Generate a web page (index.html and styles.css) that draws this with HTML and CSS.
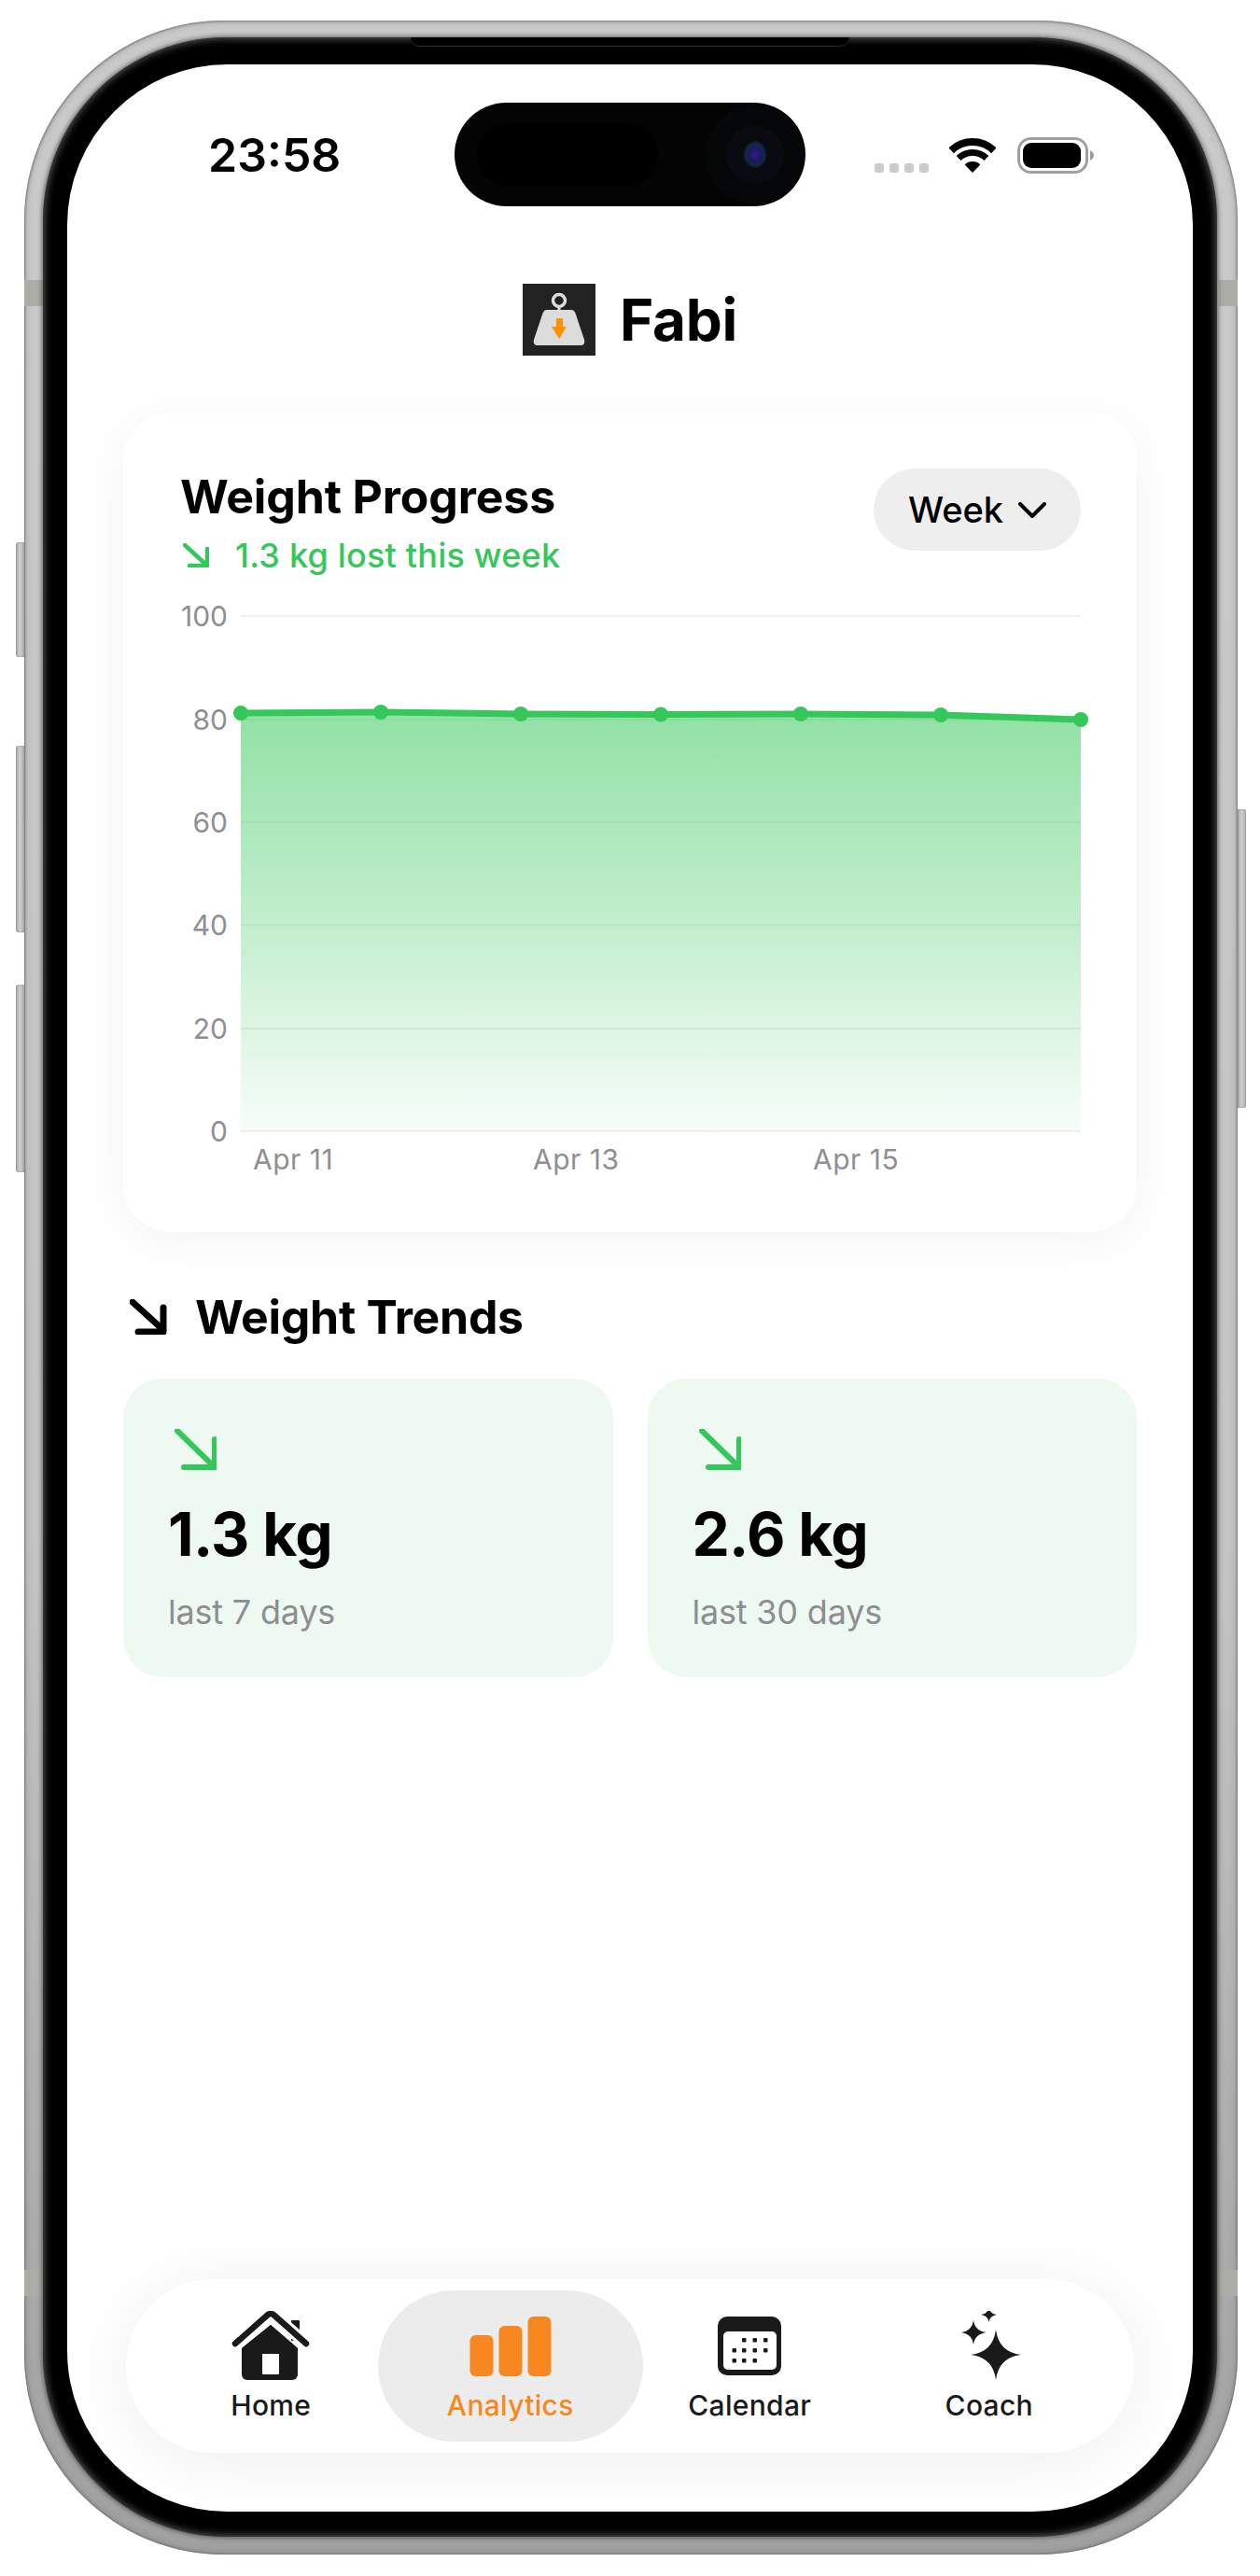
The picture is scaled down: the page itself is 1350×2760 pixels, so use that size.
FILE: index.html
```html
<!DOCTYPE html>
<html>
<head>
    <meta charset="utf-8">
    <title>Fabi</title>
    <link rel="stylesheet" href="styles.css">
</head>
<body>

<div class="device">
    <span class="side-btn btn-action"></span>
    <span class="side-btn btn-up"></span>
    <span class="side-btn btn-down"></span>
    <span class="side-btn btn-power"></span>
    <span class="band band-tl"></span>
    <span class="band band-tr"></span>
    <span class="band band-bl"></span>
    <span class="band band-br"></span>

    <div class="bezel">
        <span class="speaker"></span>
        <div class="screen">

            <div class="status">
                <div class="time">23:58</div>
                <svg class="island" viewBox="0 0 376 111">
                    <defs>
                        <radialGradient id="lens" cx="50%" cy="50%" r="50%">
                            <stop offset="0" stop-color="#2b1f8a"/>
                            <stop offset="0.5" stop-color="#1c1a5c"/>
                            <stop offset="0.8" stop-color="#0f2a40"/>
                            <stop offset="1" stop-color="#0a0c12"/>
                        </radialGradient>
                    </defs>
                    <rect width="376" height="111" rx="55.5" fill="#040404"/>
                    <circle cx="322" cy="55.5" r="53" fill="#060708"/>
                    <circle cx="322" cy="55.5" r="31" fill="#090b10"/>
                    <ellipse cx="322" cy="55.5" rx="13" ry="15" fill="url(#lens)"/>
                    <rect x="24" y="22" width="194" height="67" rx="33" fill="#000"/>
                </svg>
                <div class="status-icons">
                    <div class="signal"><i></i><i></i><i></i><i></i></div>
                    <svg class="wifi" viewBox="0 0 50 37">
                        <path d="M2.1 13.3A33 33 0 0 1 47.9 13.3" fill="none" stroke="#000" stroke-width="8"/>
                        <path d="M10.1 21.5A21.5 21.5 0 0 1 39.9 21.5" fill="none" stroke="#000" stroke-width="7"/>
                        <path d="M25 37L16.7 28.4A12 12 0 0 1 33.3 28.4Z" fill="#000"/>
                    </svg>
                    <svg class="battery" viewBox="0 0 82 39">
                        <rect x="1.5" y="1.5" width="73" height="36" rx="13" fill="none" stroke="#a0a0a0" stroke-width="3"/>
                        <rect x="6" y="6" width="62" height="27" rx="9" fill="#000"/>
                        <path d="M78 14c2 1 4 3 4 5.500s-2 4.500-4 5.500Z" fill="#999"/>
                    </svg>
                </div>
            </div>

            <div class="app-head">
                <svg class="logo" viewBox="0 0 78 77">
                    <rect width="78" height="77" fill="#222"/>
                    <circle cx="39" cy="18" r="6.500" fill="none" stroke="#dcdcdc" stroke-width="3.500"/>
                    <rect x="37.500" y="24" width="3" height="6" fill="#dcdcdc"/>
                    <path d="M26 28H52C55 28 56 30 57 33L66 60C67 64 65 66 62 66H16C13 66 11 64 12 60L21 33C22 30 23 28 26 28Z" fill="#dcdcdc"/>
                    <path d="M36 37H43V46H47L39 59L31 46H36Z" fill="#ff9000"/>
                </svg>
                <span class="app-name">Fabi</span>
            </div>

            <div class="card">
                <div class="card-head">
                    <div>
                        <h2 class="card-title">Weight Progress</h2>
                        <div class="card-sub">
                            <svg class="arrow-sm" viewBox="0 0 28 26">
                                <path d="M2 2L26 24M26 6V24H7"/>
                            </svg>
                            <span>1.3 kg lost this week</span>
                        </div>
                    </div>
                    <div class="range-pill">
                        <span>Week</span>
                        <svg class="chevron" viewBox="0 0 30 17">
                            <path d="M2 2L15 15L28 2"/>
                        </svg>
                    </div>
                </div>

                <svg class="chart" viewBox="194 640 972 630">
                    <defs>
                        <linearGradient id="areaFill" x1="0" y1="0" x2="0" y2="1">
                            <stop offset="0" stop-color="#34c759" stop-opacity="0.54"/>
                            <stop offset="0.5" stop-color="#34c759" stop-opacity="0.3"/>
                            <stop offset="1" stop-color="#34c759" stop-opacity="0.04"/>
                        </linearGradient>
                    </defs>
                    <path class="grid-line" d="M258 660H1158M258 771H1158M258 881H1158M258 991H1158M258 1102H1158M258 1212H1158"/>
                    <path d="M258 764L408 763L558 765L708 765.500L858 765L1008 766L1158 771V1212H258Z" fill="url(#areaFill)"/>
                    <path class="trend-line" d="M258 764L408 763L558 765L708 765.500L858 765L1008 766L1158 771"/>
                    <g class="trend-dots">
                        <circle cx="258" cy="764" r="8"/>
                        <circle cx="408" cy="763" r="8"/>
                        <circle cx="558" cy="765" r="8"/>
                        <circle cx="708" cy="765.500" r="8"/>
                        <circle cx="858" cy="765" r="8"/>
                        <circle cx="1008" cy="766" r="8"/>
                        <circle cx="1158" cy="771" r="8"/>
                    </g>
                    <g class="axis-y">
                        <text x="244" y="671">100</text>
                        <text x="244" y="782">80</text>
                        <text x="244" y="892">60</text>
                        <text x="244" y="1002">40</text>
                        <text x="244" y="1113">20</text>
                        <text x="244" y="1223">0</text>
                    </g>
                    <g class="axis-x">
                        <text x="271" y="1253">Apr 11</text>
                        <text x="571" y="1253">Apr 13</text>
                        <text x="871" y="1253">Apr 15</text>
                    </g>
                </svg>
            </div>

            <div class="section-head">
                <svg class="arrow-black" viewBox="0 0 40 38">
                    <path d="M3 3L36 33M36 9V35H9"/>
                </svg>
                <h2 class="section-title">Weight Trends</h2>
            </div>

            <div class="trends">
                <div class="trend-card">
                    <svg class="arrow-md" viewBox="0 0 45 44">
                        <path d="M3 2L43 41M43 11V41H10"/>
                    </svg>
                    <div class="trend-value">1.3 kg</div>
                    <div class="trend-label">last 7 days</div>
                </div>
                <div class="trend-card">
                    <svg class="arrow-md" viewBox="0 0 45 44">
                        <path d="M3 2L43 41M43 11V41H10"/>
                    </svg>
                    <div class="trend-value">2.6 kg</div>
                    <div class="trend-label">last 30 days</div>
                </div>
            </div>

            <div class="tabbar">
                <div class="tab">
                    <svg class="tab-icon" viewBox="240 2476 100 76">
                        <rect x="312" y="2486" width="9" height="22" rx="1" fill="#1a1a1a"/>
                        <path d="M290 2491L319 2516V2544A6 6 0 0 1 313 2550H265A6 6 0 0 1 259 2544V2516Z" fill="#1a1a1a"/>
                        <rect x="281" y="2522" width="18" height="22" rx="1" fill="#fff"/>
                        <path d="M252 2511L287 2480Q290 2478 293 2480L328 2511" fill="none" stroke="#fff" stroke-width="13"/>
                        <path d="M290 2491L319 2516V2530H259V2516Z" fill="#1a1a1a"/>
                        <rect x="281" y="2522" width="18" height="12" fill="#fff"/>
                        <path d="M252 2511L287 2480Q290 2478 293 2480L328 2511" fill="none" stroke="#1a1a1a" stroke-width="6.500" stroke-linecap="round" stroke-linejoin="round"/>
                    </svg>
                    <span class="tab-label">Home</span>
                </div>
                <div class="tab active">
                    <svg class="tab-icon" viewBox="496.500 2476 100 76">
                        <rect x="503" y="2502" width="25" height="44" rx="6"/>
                        <rect x="534" y="2492" width="25" height="54" rx="6"/>
                        <rect x="565" y="2482" width="25" height="64" rx="6"/>
                    </svg>
                    <span class="tab-label">Analytics</span>
                </div>
                <div class="tab">
                    <svg class="tab-icon" viewBox="753 2476 100 76">
                        <rect x="769" y="2482" width="68" height="63" rx="10" fill="#1a1a1a"/>
                        <rect x="775" y="2498" width="57" height="41" rx="5" fill="#fff"/>
                        <g fill="#1a1a1a">
                            <rect x="795" y="2505" width="4.500" height="4.500" rx="1"/>
                            <rect x="806.500" y="2505" width="4.500" height="4.500" rx="1"/>
                            <rect x="818" y="2505" width="4.500" height="4.500" rx="1"/>
                            <rect x="784.500" y="2516" width="4.500" height="4.500" rx="1"/>
                            <rect x="795" y="2516" width="4.500" height="4.500" rx="1"/>
                            <rect x="806.500" y="2516" width="4.500" height="4.500" rx="1"/>
                            <rect x="818" y="2516" width="4.500" height="4.500" rx="1"/>
                            <rect x="784.500" y="2527" width="4.500" height="4.500" rx="1"/>
                            <rect x="795" y="2527" width="4.500" height="4.500" rx="1"/>
                            <rect x="806.500" y="2527" width="4.500" height="4.500" rx="1"/>
                        </g>
                    </svg>
                    <span class="tab-label">Calendar</span>
                </div>
                <div class="tab">
                    <svg class="tab-icon" viewBox="1010 2476 100 76">
                        <g fill="#1a1a1a">
                            <path d="M1067 2496Q1070 2520 1094 2523Q1070 2526 1067 2550Q1064 2526 1040 2523Q1064 2520 1067 2496Z"/>
                            <path d="M1043 2486Q1044.500 2497.500 1057 2499Q1044.500 2500.500 1043 2512Q1041.500 2500.500 1030 2499Q1041.500 2497.500 1043 2486Z"/>
                            <path d="M1059.500 2472Q1060.500 2479 1068 2480Q1060.500 2481 1059.500 2488Q1058.500 2481 1051 2480Q1058.500 2479 1059.500 2472Z"/>
                        </g>
                    </svg>
                    <span class="tab-label">Coach</span>
                </div>
            </div>

        </div>
    </div>
</div>

</body>
</html>
```

FILE: styles.css
```css
html, body {
    margin: 0;
    background: #fff;
    font-family: Inter, "Liberation Sans", sans-serif;
    color: #000;
}

/* phone frame */
.device {
    position: relative;
    box-sizing: border-box;
    width: 1300px;
    height: 2715px;
    margin: 22px 0 0 26px;
    padding: 18px 22px 19px 20px;
    border-radius: 214px;
    background: linear-gradient(#cacaca, #c4c4c4 60%, #a0a0a0);
    box-shadow: inset 0 0 2px 1px rgba(110, 110, 110, 0.8), inset 0 0 7px 1px rgba(110, 110, 110, 0.45);
}

.bezel {
    position: relative;
    height: 100%;
    box-sizing: border-box;
    padding: 29px 26px 27px;
    border-radius: 196px;
    background: #000;
    box-shadow: 0 0 5px 1px rgba(50, 50, 50, 0.7), inset 0 0 9px 1px rgba(255, 255, 255, 0.38);
}

.speaker {
    position: absolute;
    left: 394px;
    right: 394px;
    top: 0;
    height: 9px;
    background: #000;
    border-bottom: 1px solid #2c2c2c;
    border-radius: 0 0 10px 10px;
}

.side-btn {
    position: absolute;
    width: 9px;
    background: linear-gradient(90deg, #a6a6a6, #cecece 45%, #b0b0b0);
    border-radius: 3px 0 0 3px;
    box-shadow: inset 0 0 2px rgba(70, 70, 70, 0.5);
}

.btn-action { left: -9px; top: 559px; height: 123px; }
.btn-up { left: -9px; top: 777px; height: 200px; }
.btn-down { left: -9px; top: 1033px; height: 201px; }

.btn-power {
    left: 1300px;
    top: 845px;
    height: 320px;
    border-radius: 0 3px 3px 0;
}

.band {
    position: absolute;
    width: 20px;
    height: 28px;
    background: #adada8;
}

.band-tl { left: 0; top: 278px; }
.band-tr { right: 0; top: 278px; }
.band-bl { left: 0; top: 2410px; }
.band-br { right: 0; top: 2410px; }

.screen {
    display: flex;
    flex-direction: column;
    height: 100%;
    overflow: hidden;
    border-radius: 172px;
    background: #fff;
}

/* status bar */
.status {
    display: grid;
    grid-template-columns: 415px 376px 1fr;
    align-items: center;
    padding-top: 41px;
}

.time {
    padding-left: 151px;
    font-size: 50px;
    line-height: 60px;
    font-weight: 600;
}

.island {
    display: block;
    width: 376px;
    height: 111px;
}

.status-icons {
    display: flex;
    align-items: flex-end;
    padding-left: 74px;
}

.signal {
    display: flex;
    gap: 6px;
    margin-right: 22px;
}

.signal i {
    width: 10px;
    height: 10px;
    border-radius: 3px;
    background: #ccc;
}

.wifi {
    width: 50px;
    height: 37px;
    margin-right: 23px;
}

.battery {
    width: 82px;
    height: 39px;
    margin-bottom: -1px;
}

/* app header */
.app-head {
    display: flex;
    justify-content: center;
    align-items: center;
    gap: 26px;
    margin-top: 83px;
    height: 77px;
}

.logo {
    width: 78px;
    height: 77px;
}

.app-name {
    font-size: 62px;
    font-weight: 700;
    letter-spacing: -0.3px;
}

/* progress card */
.card {
    margin: 61px 60px 0;
    padding: 60px 60px 50px 62px;
    border-radius: 50px;
    background: #fff;
    box-shadow: 0 8px 50px rgba(0, 0, 0, 0.05);
}

.card-head {
    display: flex;
    justify-content: space-between;
    align-items: flex-start;
    height: 88px;
}

.card-title {
    margin: 0 0 0 -1px;
    font-size: 50px;
    line-height: 60px;
    font-weight: 700;
    letter-spacing: -0.15px;
}

.card-sub {
    display: flex;
    align-items: center;
    gap: 28px;
    margin-top: 10px;
    padding-left: 2px;
    font-size: 36px;
    line-height: 46px;
    font-weight: 500;
    letter-spacing: 0.2px;
    color: #34c759;
}

.arrow-sm {
    width: 28px;
    height: 26px;
    fill: none;
    stroke: #34c759;
    stroke-width: 4.500;
    stroke-linecap: round;
    stroke-linejoin: round;
}

.range-pill {
    display: flex;
    justify-content: center;
    align-items: center;
    gap: 16px;
    width: 222px;
    height: 88px;
    border-radius: 44px;
    background: #eee;
    font-size: 38px;
    font-weight: 500;
}

.chevron {
    width: 30px;
    height: 17px;
    fill: none;
    stroke: #000;
    stroke-width: 4;
    stroke-linecap: round;
    stroke-linejoin: round;
}

.chart {
    display: block;
    width: 972px;
    height: 630px;
    margin-top: 50px;
}

.grid-line {
    fill: none;
    stroke: #f0f0f0;
    stroke-width: 2;
}

.trend-line {
    fill: none;
    stroke: #34c759;
    stroke-width: 7;
    stroke-linejoin: round;
}

.trend-dots {
    fill: #34c759;
}

.axis-y text,
.axis-x text {
    font-size: 30px;
    fill: #8e8e93;
}

.axis-x text {
    letter-spacing: 0.5px;
}

.axis-y text {
    text-anchor: end;
}

/* trends */
.section-head {
    display: flex;
    align-items: center;
    gap: 30px;
    margin: 61px 60px 0;
    padding-left: 7px;
}

.arrow-black {
    width: 40px;
    height: 38px;
    fill: none;
    stroke: #000;
    stroke-width: 7;
    stroke-linecap: round;
    stroke-linejoin: round;
}

.section-title {
    margin: 0;
    font-size: 50px;
    line-height: 60px;
    font-weight: 700;
    letter-spacing: -0.3px;
}

.trends {
    display: grid;
    grid-template-columns: 1fr 1fr;
    gap: 37px;
    margin: 36px 60px 0;
}

.trend-card {
    box-sizing: border-box;
    height: 320px;
    padding: 54px 40px 0 48px;
    border-radius: 42px;
    background: #eef9f2;
}

.arrow-md {
    display: block;
    width: 45px;
    height: 44px;
    margin-left: 7px;
    fill: none;
    stroke: #34c759;
    stroke-width: 6;
    stroke-linecap: round;
    stroke-linejoin: round;
}

.trend-value {
    margin-top: 29px;
    font-size: 64px;
    line-height: 80px;
    font-weight: 700;
    letter-spacing: -0.7px;
}

.trend-label {
    margin-top: 21px;
    font-size: 36px;
    line-height: 44px;
    letter-spacing: -0.2px;
    color: #8e8e93;
}

/* tab bar */
.tabbar {
    display: grid;
    grid-template-columns: repeat(4, 1fr);
    margin: auto 63px 63px;
    padding: 12px 27px;
    height: 186px;
    box-sizing: border-box;
    border-radius: 93px;
    background: #fff;
    box-shadow: 0 8px 70px rgba(0, 0, 0, 0.07);
}

.tab {
    display: flex;
    flex-direction: column;
    align-items: center;
    padding-top: 22px;
    height: 162px;
    box-sizing: border-box;
    color: #1a1a1a;
}

.tab.active {
    margin: 0 -14px;
    border-radius: 81px;
    background: #ececec;
    color: #f78820;
    fill: #f78820;
}

.tab-icon {
    width: 100px;
    height: 76px;
}

.tab-label {
    margin-top: 5px;
    font-size: 30px;
    line-height: 40px;
    font-weight: 500;
    letter-spacing: 0.3px;
}
```
